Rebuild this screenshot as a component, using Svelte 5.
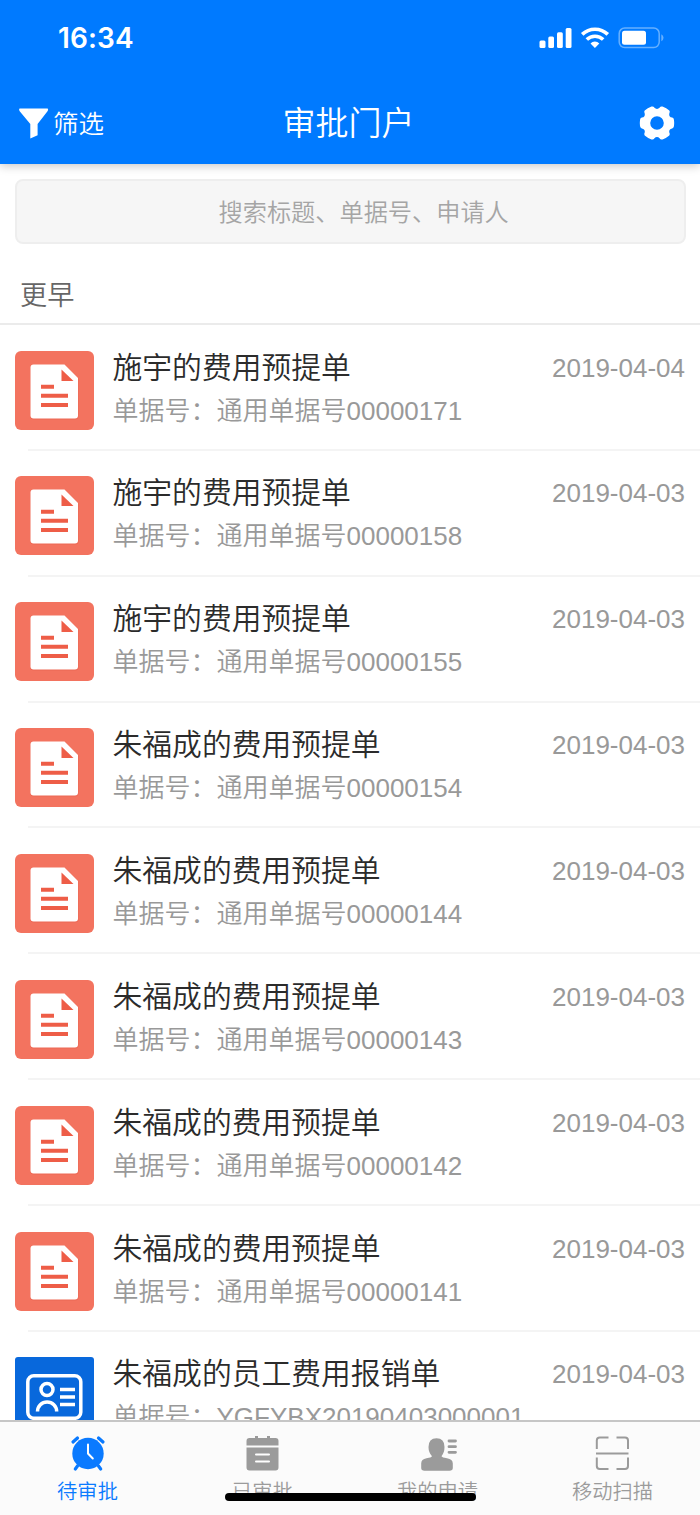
<script>
	let title = '审批门户';

	let bills = [
		{ name: '施宇的费用预提单', no: '通用单据号00000171', date: '2019-04-04', type: 'accrual' },
		{ name: '施宇的费用预提单', no: '通用单据号00000158', date: '2019-04-03', type: 'accrual' },
		{ name: '施宇的费用预提单', no: '通用单据号00000155', date: '2019-04-03', type: 'accrual' },
		{ name: '朱福成的费用预提单', no: '通用单据号00000154', date: '2019-04-03', type: 'accrual' },
		{ name: '朱福成的费用预提单', no: '通用单据号00000144', date: '2019-04-03', type: 'accrual' },
		{ name: '朱福成的费用预提单', no: '通用单据号00000143', date: '2019-04-03', type: 'accrual' },
		{ name: '朱福成的费用预提单', no: '通用单据号00000142', date: '2019-04-03', type: 'accrual' },
		{ name: '朱福成的费用预提单', no: '通用单据号00000141', date: '2019-04-03', type: 'accrual' },
		{ name: '朱福成的员工费用报销单', no: 'YGFYBX20190403000001', date: '2019-04-03', type: 'expense' }
	];

	let tabs = [
		{ id: 'todo', label: '待审批' },
		{ id: 'done', label: '已审批' },
		{ id: 'mine', label: '我的申请' },
		{ id: 'scan', label: '移动扫描' }
	];

	let active = $state('todo');
</script>

<div class="page">
	<header>
		<div class="status">
			<span class="time">16:34</span>
			<svg class="signals" width="126" height="24" viewBox="0 0 126 24">
				<g fill="#fff">
					<rect x="1.5" y="14.5" width="6" height="7.5" rx="1.5" />
					<rect x="10.3" y="10.5" width="5.7" height="11.5" rx="1.5" />
					<rect x="19" y="6.2" width="5.8" height="15.8" rx="1.5" />
					<rect x="27.7" y="2" width="5.8" height="20" rx="1.5" />
					<path d="M52.5 17.5a6 6 0 0 1 8.8 0L56.9 22z" />
				</g>
				<g fill="none" stroke="#fff" stroke-width="3.6">
					<path d="M44.2 8.4a18.3 18.3 0 0 1 25.6 0" />
					<path d="M48.8 13.5a11.8 11.8 0 0 1 16.4 0" />
				</g>
				<rect x="81.2" y="2" width="40" height="19.6" rx="5.5" fill="none" stroke="#66b0ff" stroke-width="1.5" />
				<rect x="84" y="4.8" width="24" height="14" rx="2.5" fill="#fff" />
				<path d="M123.3 8.3q2.2 1 2.2 3.5t-2.2 3.5z" fill="#66b0ff" />
			</svg>
		</div>
		<div class="nav">
			<button class="filter">
				<svg width="31" height="31" viewBox="0 0 31 31">
					<path d="M1.5.5h28.2q1 1-.2 2.7L19.6 16v11.2l-7.3 3.2V16L1.7 3.2Q.5 1.5 1.5.5z" fill="#fff" />
				</svg>
				<span>筛选</span>
			</button>
			<h1>{title}</h1>
			<button class="setting" aria-label="设置">
				<svg width="36" height="36" viewBox="-18 -18 36 36">
					<path
						fill="#fff"
						fill-rule="evenodd"
						d="M-5.5-16.4Q-3.5-17-2.8-15.4Q0-12.600 2.800-15.400Q3.500-17 5.500-16.400Q9.500-15 12.300-12.500Q13.300-11.300 12.300-9.600Q11.500-6.100 15.200-5.400Q16.800-5 17-3Q17.400 0 17 3Q16.800 5 15.200 5.400Q11.500 6.100 12.300 9.600Q13.300 11.300 12.300 12.500Q9.500 15 5.500 16.400Q3.500 17 2.800 15.400Q0 12.600-2.800 15.400Q-3.500 17-5.500 16.400Q-9.500 15-12.300 12.500Q-13.300 11.300-12.300 9.600Q-11.500 6.100-15.200 5.400Q-16.800 5-17 3Q-17.400 0-17-3Q-16.800-5-15.200-5.400Q-11.500-6.100-12.300-9.600Q-13.300-11.300-12.300-12.500Q-9.500-15-5.500-16.400zM0-6.800a6.800 6.800 0 1 0 0 13.600a6.800 6.800 0 1 0 0-13.600z"
					/>
				</svg>
			</button>
		</div>
	</header>

	<main>
		<div class="search">
			<span>搜索标题、单据号、申请人</span>
		</div>
		<h2>更早</h2>
		<ul>
			{#each bills as bill}
				<li>
					{#if bill.type === 'accrual'}
						<svg class="icon" viewBox="0 0 79 79">
							<rect width="79" height="79" rx="6" fill="#f3735f" />
							<path d="M18.5 14H50L63.5 27v38.5q0 3-3 3H18.5q-3 0-3-3V17q0-3 3-3z" fill="#e9604c" opacity=".6" />
							<path d="M18.5 13.5H49.5L63 27v37.5q0 3-3 3H18.5q-3 0-3-3v-48q0-3 3-3z" fill="#fff" />
							<path d="M46.5 18.5V30H58.5z" fill="#ee5d47" />
							<path d="M26 35.7h13M26 44.7h27M26 53.9h27" stroke="#ee5d47" stroke-width="4" />
						</svg>
					{:else}
						<svg class="icon" viewBox="0 0 79 79">
							<rect width="79" height="79" rx="3" fill="#0868dc" />
							<g fill="none" stroke="#fff" stroke-width="3.5">
								<rect x="12.8" y="18.8" width="53" height="42.5" rx="6" />
								<circle cx="32" cy="32.5" r="6" />
								<path d="M22.5 54.5a9.6 9.6 0 0 1 19.2 0" />
								<path d="M45 32.5h15M45 40h15M45 47.5h15" />
							</g>
						</svg>
					{/if}
					<div class="info">
						<div class="name">{bill.name}</div>
						<div class="no">单据号：{bill.no}</div>
					</div>
					<time>{bill.date}</time>
				</li>
			{/each}
		</ul>
	</main>

	<footer>
		{#each tabs as tab}
			<button class="tab" class:active={active === tab.id} onclick={() => (active = tab.id)}>
				<svg width="36" height="36" viewBox="0 0 36 36" fill="currentColor">
					{#if tab.id === 'todo'}
						<circle cx="18" cy="18.5" r="15.7" />
						<path d="M3 7l4.5-4M33 7l-4.5-4M7.5 31l-2.2 3M28.5 31l2.2 3" fill="none" stroke="currentColor" stroke-width="3.2" stroke-linecap="round" />
						<path d="M18 9.5v9l4.8 5" fill="none" stroke="#fff" stroke-width="2" stroke-linecap="round" />
					{:else if tab.id === 'done'}
						<path d="M4.5 3h5.5V1h3v2h9V1h3v2h5.5q3 0 3 3v4.5H1.5V6q0-3 3-3zM1.5 12.5h32v20q0 3-3 3H4.5q-3 0-3-3z" />
						<path d="M11 19.5h13M11 26.5h13" stroke="#fff" stroke-width="2" stroke-linecap="round" />
					{:else if tab.id === 'mine'}
						<path d="M8.500 12Q8.500 3.200 16.500 3.200T24.500 12Q24.500 17.500 21.500 21.200Q22 22.500 27 23.200Q32.800 24.200 32.800 28.500V33Q32.800 35.800 29.500 35.800H4.500Q1.200 35.800 1.200 33V28.500Q1.200 24.200 6.500 23.200Q11.500 22.500 12 21.200Q8.500 17.500 8.500 12z" />
						<path d="M29 6h6.5M29 11.700h6.500M29 17.300h6.500" stroke="currentColor" stroke-width="2.800" stroke-linecap="round" />
					{:else}
						<path d="M1.8 14V5.5q0-3 3-3H13.5M21.5 2.5H30q3 0 3 3V14M1.8 22.5V31q0 3 3 3H13.5M21.5 34H30q3 0 3-3v-8.5M1 18.6h32.5" fill="none" stroke="currentColor" stroke-width="2" />
					{/if}
				</svg>
				<span>{tab.label}</span>
			</button>
		{/each}
		<div class="home-bar"></div>
	</footer>
</div>

<style>
	:global(body) {
		margin: 0;
		background: #fff;
	}

	.page {
		display: flex;
		flex-direction: column;
		height: 1515px;
		overflow: hidden;
		font-family: 'Liberation Sans', 'Noto Sans CJK SC DemiLight', 'Noto Sans CJK SC', sans-serif;
		font-weight: 350;
	}

	button {
		border: 0;
		padding: 0;
		background: none;
		font: inherit;
		color: inherit;
	}

	svg {
		display: block;
		flex: none;
		overflow: visible;
	}

	header {
		flex: none;
		height: 164px;
		box-sizing: border-box;
		background: #007aff;
		color: #fff;
		box-shadow: 0 2px 9px rgba(0, 0, 0, 0.22);
		z-index: 1;
	}

	.status {
		display: flex;
		justify-content: space-between;
		align-items: center;
		height: 82px;
		box-sizing: border-box;
		padding: 0 36px 6px 58px;
	}

	.time {
		font: 600 28px/34px Inter, sans-serif;
		letter-spacing: 0.1px;
	}

	.nav {
		display: grid;
		grid-template-columns: 1fr auto 1fr;
		align-items: center;
		height: 82px;
		padding: 0 25px 0 18px;
	}

	.filter {
		display: flex;
		align-items: center;
		gap: 4px;
		font-size: 25.5px;
	}

	.filter span {
		padding-bottom: 4px;
	}

	h1 {
		margin: 0;
		padding: 0 0 5px 4px;
		font-size: 33px;
		font-weight: 350;
	}

	.setting {
		justify-self: end;
	}

	main {
		flex: 1;
		min-height: 0;
		overflow: hidden;
		background: #fff;
	}

	.search {
		display: flex;
		align-items: center;
		justify-content: center;
		height: 65px;
		box-sizing: border-box;
		margin: 15px 14px 0 15px;
		padding-bottom: 3px;
		border: 2px solid #eee;
		border-radius: 8px;
		background: #f6f6f6;
		color: #a5a5a5;
		font-size: 24.2px;
	}

	.search span {
		padding-left: 27px;
		width: 318px;
		box-sizing: border-box;
		white-space: nowrap;
	}

	h2 {
		margin: 0;
		height: 81px;
		box-sizing: border-box;
		padding: 25px 20px 0;
		border-bottom: 2px solid #ebebeb;
		color: #666;
		font-size: 27.2px;
		line-height: 54px;
		font-weight: 350;
	}

	ul {
		margin: 0;
		padding: 0;
		list-style: none;
	}

	li {
		display: flex;
		height: 125.87px;
		box-sizing: border-box;
		padding: 25.5px 15px 0 15px;
		background: linear-gradient(#f4f4f4, #f4f4f4) 28px 100% / 100% 2px no-repeat;
	}

	.icon {
		width: 79px;
		height: 79px;
	}

	.info {
		flex: 1;
		padding-left: 18.5px;
		white-space: nowrap;
	}

	.name {
		height: 35px;
		color: #2b2b2b;
		font-size: 29.8px;
		line-height: 33px;
	}

	.no {
		color: #999;
		font-size: 26px;
		line-height: 51px;
	}

	time {
		color: #999;
		font-size: 26px;
		line-height: 34px;
	}

	footer {
		position: relative;
		flex: none;
		display: grid;
		grid-template-columns: repeat(4, 1fr);
		height: 95px;
		box-sizing: border-box;
		border-top: 2px solid #c6c6c6;
		background: #fbfbfb;
	}

	.tab {
		display: flex;
		flex-direction: column;
		align-items: center;
		padding-top: 13px;
		color: #9b9b9b;
		font-size: 20.3px;
	}

	.tab span {
		margin-top: 4px;
		line-height: 34px;
	}

	.tab.active {
		color: #0a7aff;
	}

	/* sits over the tab labels */
	.home-bar {
		position: absolute;
		left: 225px;
		bottom: 14px;
		width: 251px;
		height: 8px;
		border-radius: 4px;
		background: #000;
	}
</style>
